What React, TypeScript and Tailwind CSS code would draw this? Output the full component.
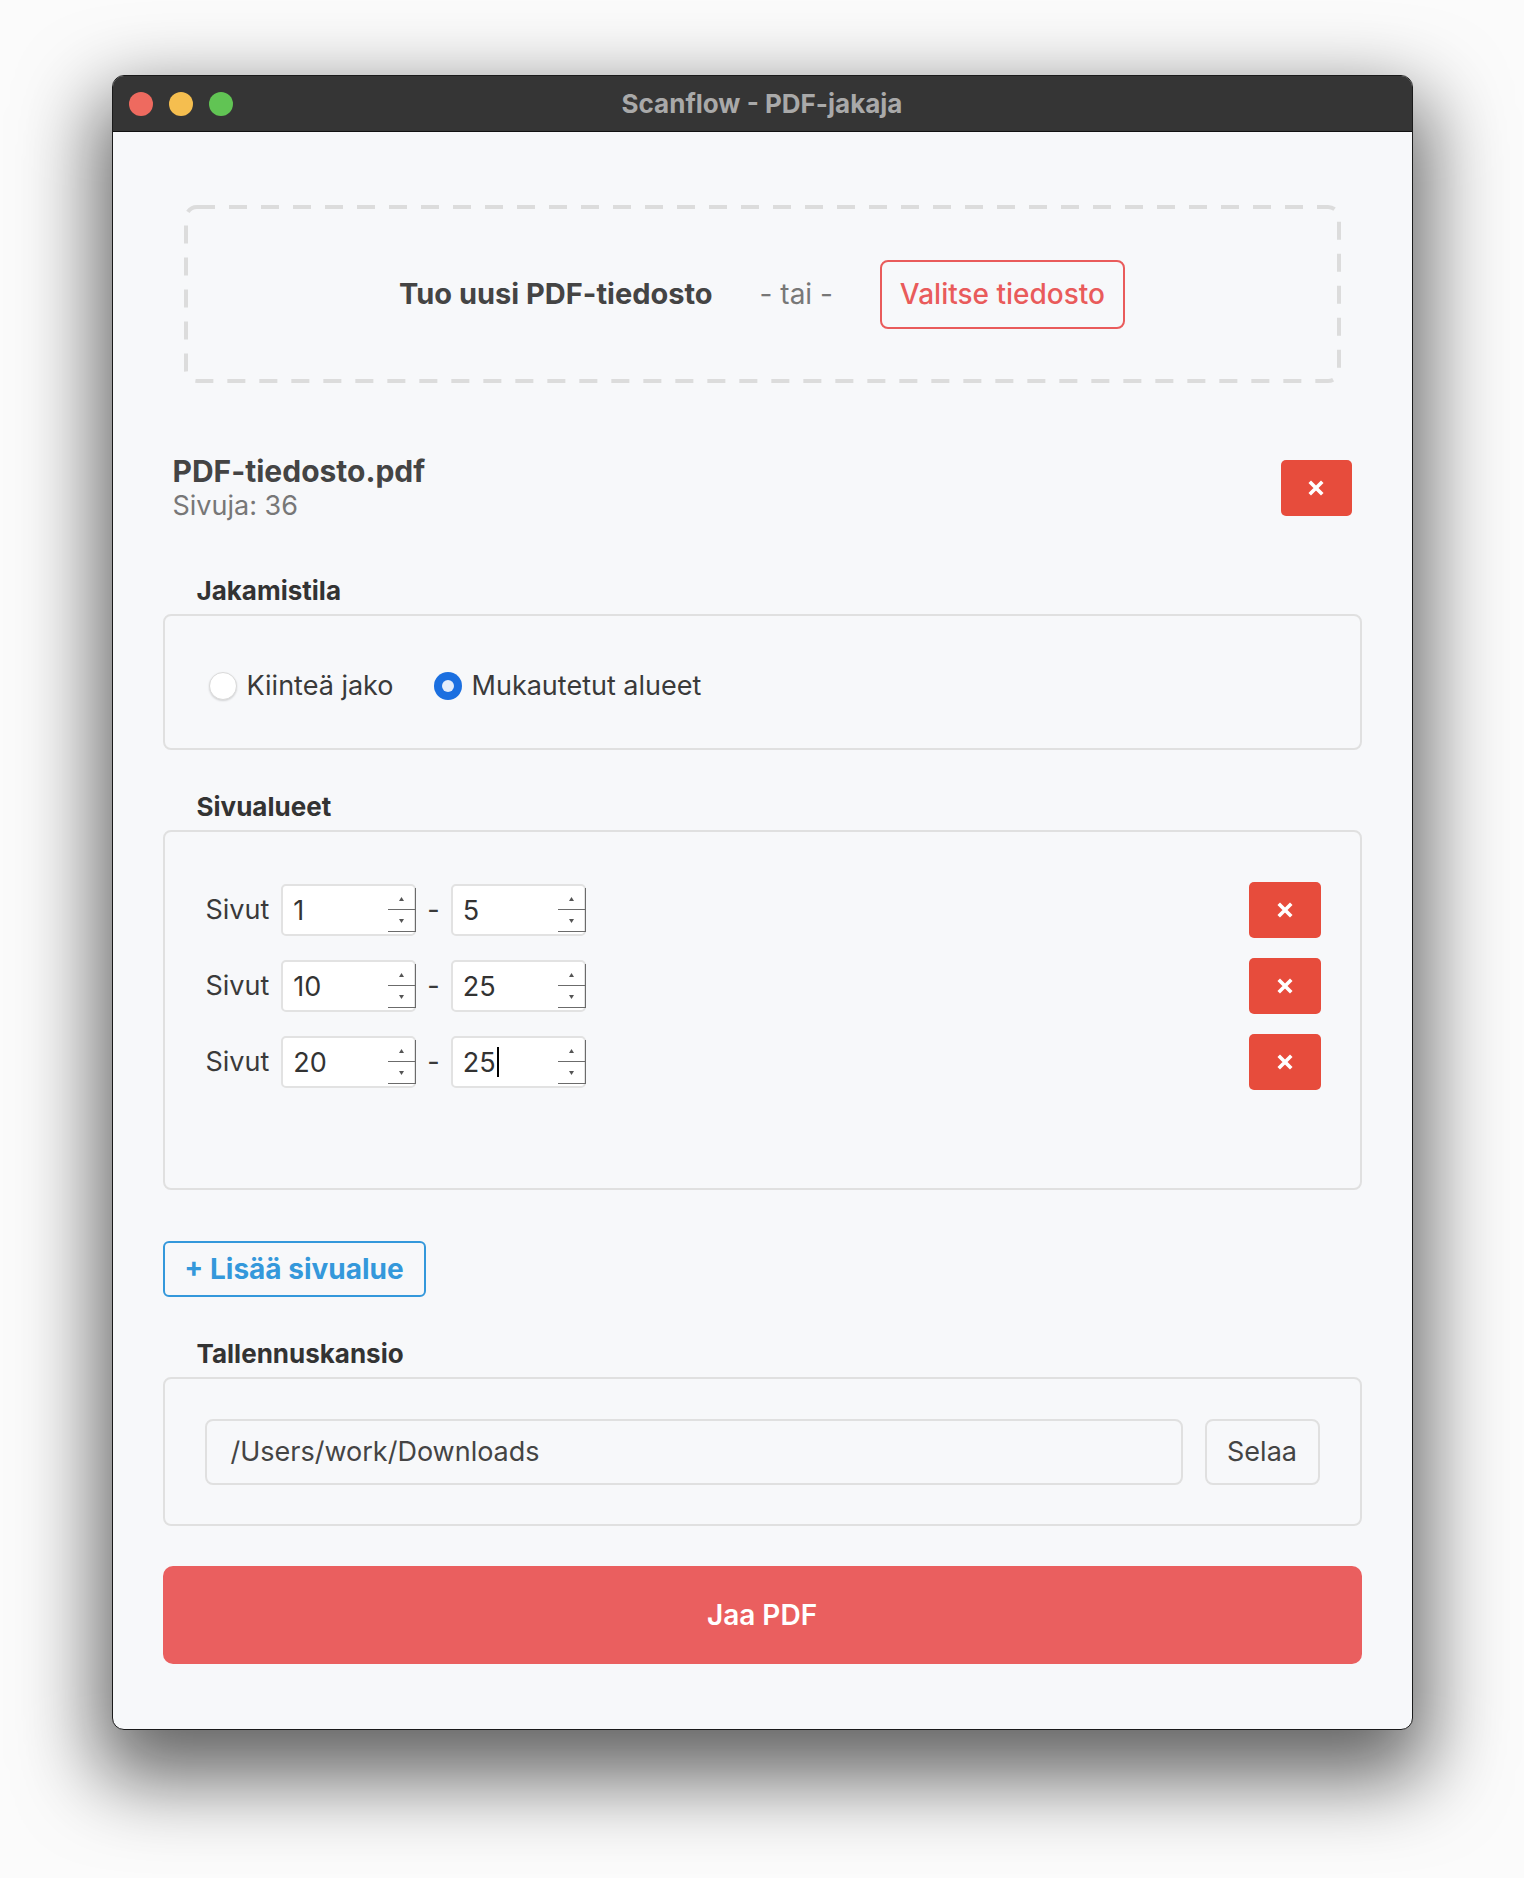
import { useState } from "react";

const font = { fontFamily: "Inter, 'Noto Sans', sans-serif" };

function XIcon() {
  return (
    <svg width="16" height="16" viewBox="0 0 16 16" className="block">
      <path d="M3 3 L13 13 M13 3 L3 13" stroke="white" strokeWidth="3.6" strokeLinecap="square" />
    </svg>
  );
}

function DeleteButton({ wide }: { wide?: boolean }) {
  return (
    <button
      className={`${wide ? "w-[71px]" : "w-[72px]"} h-[56px] bg-[#e74c3c] rounded-[5px] flex items-center justify-center shrink-0`}
    >
      <XIcon />
    </button>
  );
}

// number field with mac style stepper
function NumberField({ value, caret }: { value: string; caret?: boolean }) {
  return (
    <div className="relative w-[135px] h-[52px] bg-white border-2 border-[#e2e2e2] rounded-[5px] flex items-center pl-[10px]">
      <span className="text-[27px] text-[#333] leading-none">{value}</span>
      {caret && <span className="w-[2px] h-[30px] bg-black ml-[1px]" />}
      <div className="absolute right-[-2px] top-[2px] bottom-[2px] w-[28px] border-r-[1.5px] border-b-[1.5px] border-[#6b6b6b] flex flex-col">
        <div className="flex-1 border-b-[1.5px] border-[#6b6b6b] flex items-center justify-center">
          <svg width="5" height="4" viewBox="0 0 5 4">
            <path d="M0 4 L2.5 0 L5 4 Z" fill="#555" />
          </svg>
        </div>
        <div className="flex-1 flex items-center justify-center">
          <svg width="5" height="4" viewBox="0 0 5 4">
            <path d="M0 0 L2.5 4 L5 0 Z" fill="#555" />
          </svg>
        </div>
      </div>
    </div>
  );
}

function Legend({ children }: { children: string }) {
  return <div className="pl-[34px] text-[26px] leading-[30px] font-bold text-[#333] mb-[8px]">{children}</div>;
}

export default function App() {
  const [mode, setMode] = useState<"fixed" | "custom">("custom");
  const ranges = [
    { from: "1", to: "5" },
    { from: "10", to: "25" },
    { from: "20", to: "25" },
  ];

  return (
    <div className="min-h-screen bg-[#fbfbfb] flex justify-center pt-[75px]" style={font}>
      <div className="w-[1301px] h-[1655px] rounded-[12px] border border-[#1a1a1a] overflow-hidden bg-[#f7f8fa] shadow-[0_35px_80px_14px_rgba(0,0,0,0.6)] flex flex-col">
        {/* title bar */}
        <div className="relative h-[56px] bg-[#353535] border-b border-[#111] flex items-center pl-[16px] gap-[16px] shrink-0">
          <span className="w-[24px] h-[24px] rounded-full bg-[#ee6a5f]" />
          <span className="w-[24px] h-[24px] rounded-full bg-[#f5be4f]" />
          <span className="w-[24px] h-[24px] rounded-full bg-[#61c454]" />
          <div className="absolute inset-0 flex items-center justify-center text-[26px] font-bold text-[#a9a9a9] pointer-events-none">
            Scanflow - PDF-jakaja
          </div>
        </div>

        <div className="px-[50px] pt-[73px] pb-[64px] flex flex-col">
          {/* drop zone */}
          <div className="relative mx-[21px] h-[178px] flex items-center justify-center gap-[47px]">
            <svg className="absolute inset-0 pointer-events-none" width="1157" height="178">
              <rect x="2" y="2" width="1153" height="174" rx="11" fill="none" stroke="#dcdcdc" strokeWidth="4" strokeDasharray="18 14" />
            </svg>
            <span className="text-[29px] font-bold text-[#444]">Tuo uusi PDF-tiedosto</span>
            <span className="text-[28px] text-[#777]">- tai -</span>
            <button className="h-[69px] w-[245px] border-2 border-[#e95b5b] rounded-[8px] text-[#e95b5b] text-[28px] font-medium">
              Valitse tiedosto
            </button>
          </div>

          {/* file info */}
          <div className="mt-[70px] px-[10px] flex items-center justify-between">
            <div>
              <div className="text-[30px] leading-[36px] font-bold text-[#444]">PDF-tiedosto.pdf</div>
              <div className="text-[27px] leading-[34px] text-[#777]">Sivuja: 36</div>
            </div>
            <DeleteButton wide />
          </div>

          {/* split mode */}
          <div className="mt-[53px]">
            <Legend>Jakamistila</Legend>
            <div className="h-[136px] border-2 border-[#e0e0e0] rounded-[8px] px-[44px] pt-[8px] flex items-center gap-[40px]">
              {[
                { key: "fixed" as const, label: "Kiinteä jako" },
                { key: "custom" as const, label: "Mukautetut alueet" },
              ].map((opt) => (
                <label key={opt.key} className="flex items-center gap-[10px] cursor-pointer" onClick={() => setMode(opt.key)}>
                  {mode === opt.key ? (
                    <span className="w-[28px] h-[28px] rounded-full bg-[#1b6fe0] flex items-center justify-center">
                      <span className="w-[12px] h-[12px] rounded-full bg-[#e3ecfa]" />
                    </span>
                  ) : (
                    <span className="w-[28px] h-[28px] rounded-full bg-white border border-[#dadada] shadow-[0_1px_2px_rgba(0,0,0,0.15)]" />
                  )}
                  <span className="text-[27px] text-[#3a3a3a]">{opt.label}</span>
                </label>
              ))}
            </div>
          </div>

          {/* page ranges */}
          <div className="mt-[42px]">
            <Legend>Sivualueet</Legend>
            <div className="border-2 border-[#e0e0e0] rounded-[8px] pl-[41px] pr-[39px] pt-[50px] pb-[98px] flex flex-col gap-[20px]">
              {ranges.map((r, i) => (
                <div key={i} className="h-[56px] flex items-center">
                  <span className="text-[27px] text-[#3a3a3a] mr-[12px]">Sivut</span>
                  <NumberField value={r.from} />
                  <span className="text-[27px] text-[#3a3a3a] mx-[11px]">-</span>
                  <NumberField value={r.to} caret={i === 2} />
                  <div className="flex-1" />
                  <DeleteButton />
                </div>
              ))}
            </div>
          </div>

          <div className="mt-[51px]">
            <button className="h-[56px] w-[263px] border-2 border-[#3498db] rounded-[6px] text-[28px] font-bold text-[#3498db]">
              + Lisää sivualue
            </button>
          </div>

          {/* output folder */}
          <div className="mt-[42px]">
            <Legend>Tallennuskansio</Legend>
            <div className="border-2 border-[#e0e0e0] rounded-[8px] px-[40px] pt-[40px] pb-[39px] flex items-center gap-[22px]">
              <div className="flex-1 h-[66px] border-2 border-[#e0e0e0] rounded-[8px] flex items-center pl-[24px] text-[27px] text-[#444]">
                /Users/work/Downloads
              </div>
              <button className="w-[115px] h-[66px] border-2 border-[#e0e0e0] rounded-[8px] text-[27px] text-[#444]">
                Selaa
              </button>
            </div>
          </div>

          <button className="mt-[40px] h-[98px] rounded-[10px] bg-[#ea5f5f] text-white text-[28px] font-semibold">
            Jaa PDF
          </button>
        </div>
      </div>
    </div>
  );
}
